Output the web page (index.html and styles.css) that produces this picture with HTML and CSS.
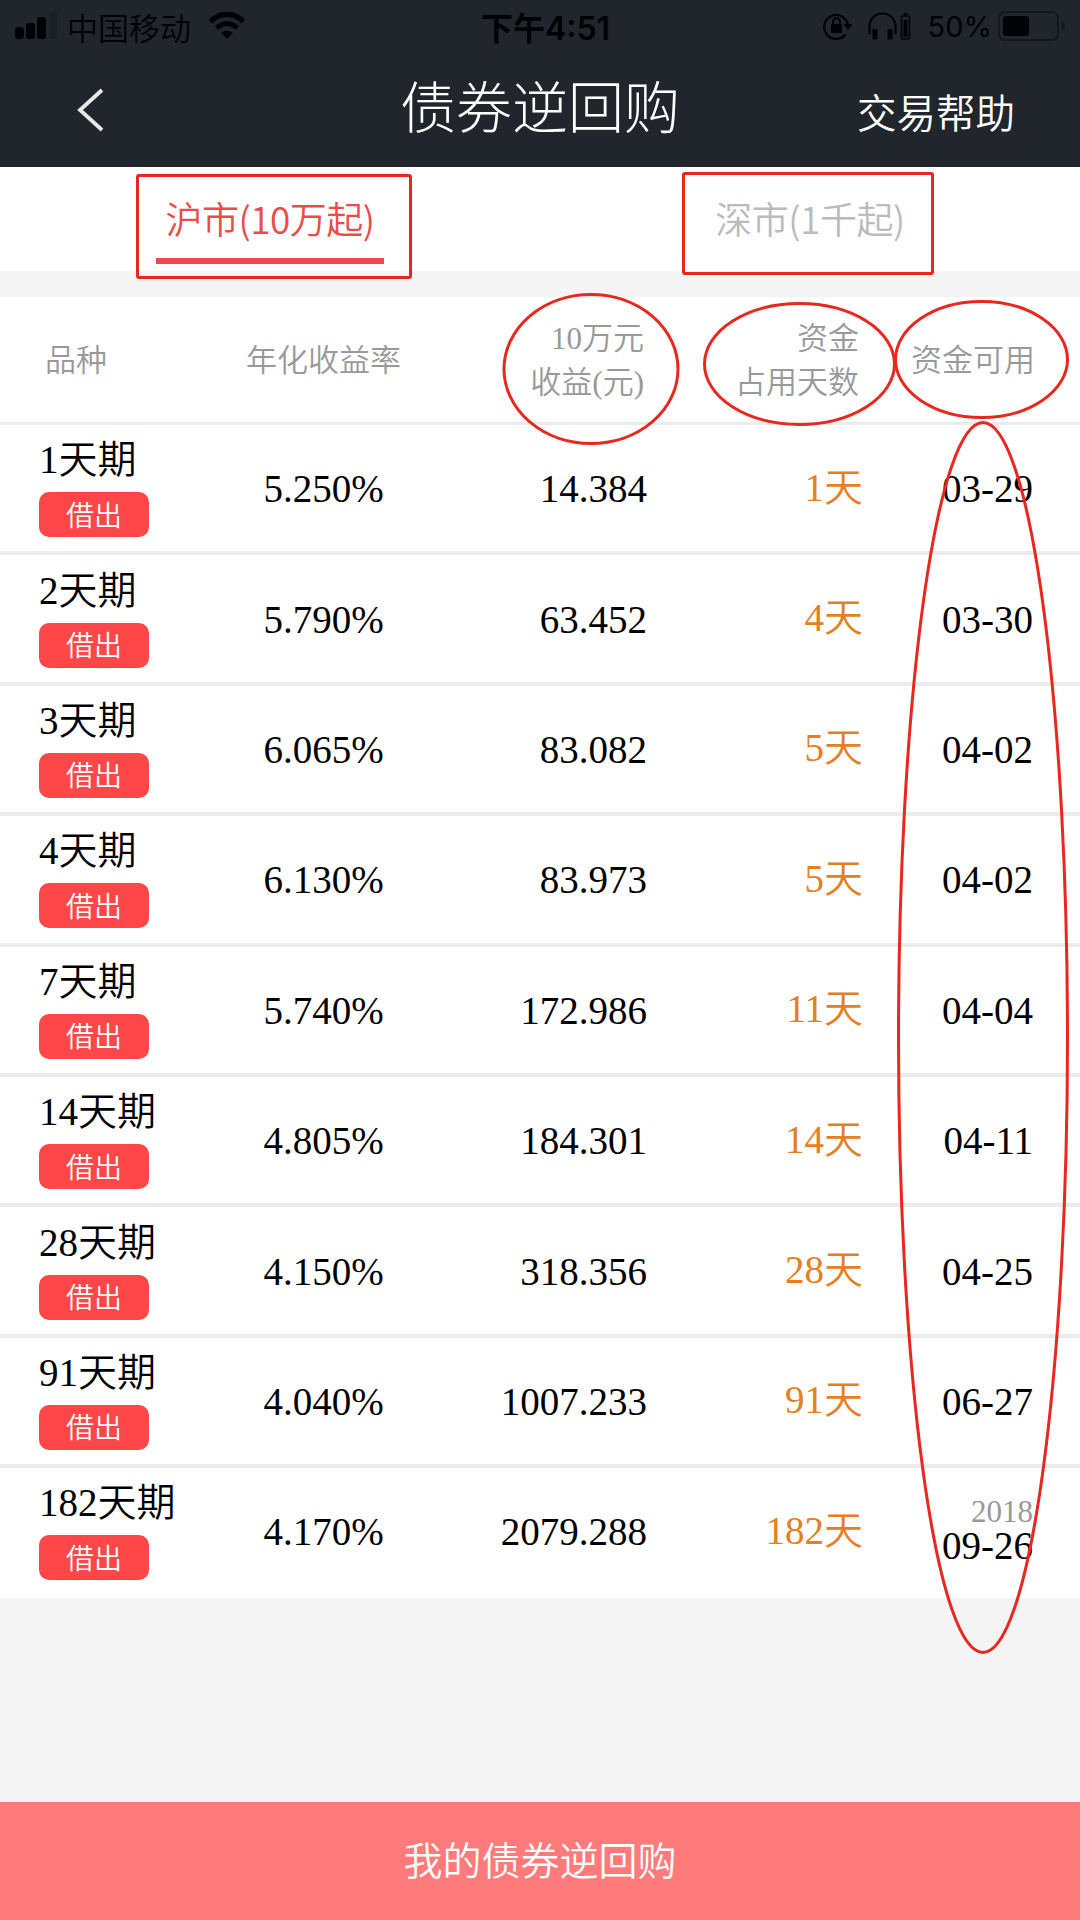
FILE: index.html
```html
<!DOCTYPE html>
<html lang="zh-CN">
<head>
<meta charset="UTF-8">
<meta name="viewport" content="width=device-width, initial-scale=1.0">
<title>债券逆回购</title>
<link rel="stylesheet" href="styles.css">
</head>
<body>
<div class="page">
    <header class="header">
        <div class="status-bar">
            <div class="status-left">
                <svg class="signal" width="44" height="28" viewBox="0 0 44 28">
                    <rect x="0" y="15" width="9" height="12" rx="3"/>
                    <rect x="11" y="11" width="9" height="16" rx="2.5"/>
                    <rect x="22" y="5" width="9" height="22" rx="2.5"/>
                    <rect x="34" y="0" width="8" height="27" rx="2.5" fill="#1b1f2a"/>
                </svg>
                <span class="carrier">中国移动</span>
                <svg class="wifi" width="38" height="28" viewBox="0 0 38 28">
                    <path d="M2.5 9.5Q19 -5 35.500 9.500" fill="none" stroke="#000306" stroke-width="5.500"/>
                    <path d="M8.500 16Q19 7 29.500 16" fill="none" stroke="#000306" stroke-width="5"/>
                    <path d="M13 21Q19 16.500 25 21L19 27Z"/>
                </svg>
            </div>
            <div class="clock">下午4:51</div>
            <div class="status-right">
                <svg class="lock" width="30" height="28" viewBox="0 0 30 28">
                    <path d="M22.500 22.500A12 12 0 1 1 25 13" fill="none" stroke="#000306" stroke-width="2.200"/>
                    <path d="M20.500 12H29.500L25 18Z"/>
                    <rect x="8" y="12" width="11" height="9" rx="1"/>
                    <path d="M10 13V9.500a3.500 3.500 0 0 1 7 0V13" fill="none" stroke="#000306" stroke-width="1.800"/>
                </svg>
                <svg class="headphones" width="43" height="28" viewBox="0 0 43 28">
                    <path d="M1.500 22V14.500a13 13 0 0 1 26 0V22" fill="none" stroke="#000306" stroke-width="2.200"/>
                    <rect x="4.500" y="17" width="5" height="10.500" rx="1"/>
                    <rect x="19.500" y="17" width="5" height="10.500" rx="1"/>
                    <rect x="33.500" y="4" width="8" height="23" rx="1.500" fill="none" stroke="#000306" stroke-width="1.600"/>
                    <rect x="35.500" y="0.800" width="4" height="2"/>
                    <rect x="35.500" y="8" width="4" height="17"/>
                </svg>
                <span class="percent">50%</span>
                <svg class="battery" width="68" height="30" viewBox="0 0 68 30">
                    <rect x="1" y="1" width="59" height="28" rx="6" fill="none" stroke="#14171f" stroke-width="2"/>
                    <rect x="5" y="5" width="26" height="20" rx="3"/>
                    <path d="M64 10Q70 15 64 20Z" fill="#14171f"/>
                </svg>
            </div>
        </div>
        <div class="nav">
            <svg class="back" width="28" height="44" viewBox="0 0 28 44">
                <path d="M25 2L3 22L25 42" fill="none" stroke="#e8e8e8" stroke-width="3.800"/>
            </svg>
            <h1 class="title">债券逆回购</h1>
            <a class="help">交易帮助</a>
        </div>
    </header>

    <nav class="tabs">
        <div class="tab"><span class="tab-label active">沪市(10万起)</span></div>
        <div class="tab"><span class="tab-label">深市(1千起)</span></div>
    </nav>

    <main class="table">
        <div class="row head">
            <div class="name">品种</div>
            <div class="rate">年化收益率</div>
            <div class="income">10万元<br>收益(元)</div>
            <div class="days">资金<br>占用天数</div>
            <div class="date">资金可用</div>
        </div>
        <div class="row">
            <div class="name">1天期<button class="lend">借出</button></div>
            <div class="rate">5.250%</div>
            <div class="income">14.384</div>
            <div class="days">1天</div>
            <div class="date">03-29</div>
        </div>
        <div class="row">
            <div class="name">2天期<button class="lend">借出</button></div>
            <div class="rate">5.790%</div>
            <div class="income">63.452</div>
            <div class="days">4天</div>
            <div class="date">03-30</div>
        </div>
        <div class="row">
            <div class="name">3天期<button class="lend">借出</button></div>
            <div class="rate">6.065%</div>
            <div class="income">83.082</div>
            <div class="days">5天</div>
            <div class="date">04-02</div>
        </div>
        <div class="row">
            <div class="name">4天期<button class="lend">借出</button></div>
            <div class="rate">6.130%</div>
            <div class="income">83.973</div>
            <div class="days">5天</div>
            <div class="date">04-02</div>
        </div>
        <div class="row">
            <div class="name">7天期<button class="lend">借出</button></div>
            <div class="rate">5.740%</div>
            <div class="income">172.986</div>
            <div class="days">11天</div>
            <div class="date">04-04</div>
        </div>
        <div class="row">
            <div class="name">14天期<button class="lend">借出</button></div>
            <div class="rate">4.805%</div>
            <div class="income">184.301</div>
            <div class="days">14天</div>
            <div class="date">04-11</div>
        </div>
        <div class="row">
            <div class="name">28天期<button class="lend">借出</button></div>
            <div class="rate">4.150%</div>
            <div class="income">318.356</div>
            <div class="days">28天</div>
            <div class="date">04-25</div>
        </div>
        <div class="row">
            <div class="name">91天期<button class="lend">借出</button></div>
            <div class="rate">4.040%</div>
            <div class="income">1007.233</div>
            <div class="days">91天</div>
            <div class="date">06-27</div>
        </div>
        <div class="row">
            <div class="name">182天期<button class="lend">借出</button></div>
            <div class="rate">4.170%</div>
            <div class="income">2079.288</div>
            <div class="days">182天</div>
            <div class="date"><span class="year">2018</span>09-26</div>
        </div>
    </main>

    <button class="mine">我的债券逆回购</button>

    <!-- red marks drawn over the page -->
    <svg class="marks" width="1080" height="1920" viewBox="0 0 1080 1920">
        <rect x="137.500" y="175.500" width="273" height="102" rx="1.500"/>
        <rect x="683.500" y="173.500" width="249" height="100" rx="1.500"/>
        <ellipse cx="591" cy="369" rx="87" ry="74.500"/>
        <ellipse cx="799.500" cy="364" rx="95" ry="60.500"/>
        <ellipse cx="981.500" cy="359.500" rx="86" ry="58"/>
        <ellipse cx="983" cy="1037.500" rx="84.500" ry="615"/>
    </svg>
</div>
</body>
</html>
```
FILE: styles.css
```css
* {
    box-sizing: border-box;
}
body {
    margin: 0;
    background-color: #f4f4f4;
    font-family: "Noto Sans CJK SC", sans-serif;
    font-weight: 350;
}
button {
    border: none;
    padding: 0;
    font-family: inherit;
    font-weight: inherit;
    color: #fff;
}
.page {
    position: relative;
    display: flex;
    flex-direction: column;
    height: 1920px;
    overflow: hidden;
}

/* header */
.header {
    height: 167px;
    background-color: #21262d;
}
.status-bar {
    display: grid;
    grid-template-columns: 1fr auto 1fr;
    align-items: center;
    height: 52px;
    padding: 0 14px 0 15px;
    color: #000306;
    fill: #000306;
    font-size: 31px;
}
.status-left,
.status-right {
    display: flex;
    align-items: center;
}
.status-right {
    justify-content: flex-end;
}
.carrier {
    margin: 0 17px 0 8px;
}
.clock {
    padding-left: 10px;
    font-family: Inter, "Noto Sans CJK SC", sans-serif;
    font-weight: 600;
    font-size: 32px;
}
.headphones {
    margin-left: 15px;
}
.percent {
    margin: 0 6px 0 17px;
    font-family: Inter, sans-serif;
    font-weight: 400;
    font-size: 29px;
}
.nav {
    display: grid;
    grid-template-columns: 300px 1fr 300px;
    align-items: center;
    height: 115px;
    color: #fff;
}
.back {
    margin-left: 77px;
}
.title {
    margin: 0;
    padding-bottom: 12px;
    font-size: 56px;
    font-weight: 300;
    line-height: 60px;
    text-align: center;
}
.help {
    padding: 2px 65px 0 0;
    font-size: 39.5px;
    text-align: right;
}

/* tabs */
.tabs {
    display: grid;
    grid-template-columns: 1fr 1fr;
    height: 104px;
    background-color: #fff;
    margin-bottom: 26px;
}
.tab {
    display: flex;
    justify-content: center;
}
.tab-label {
    height: 97px;
    padding: 0 9px;
    font-size: 37px;
    line-height: 102px;
    letter-spacing: -0.5px;
    color: #bbb;
}
.tab-label.active {
    color: #ec4b4b;
    border-bottom: 6px solid #ec4b4b;
}

/* table */
.table {
    background-color: #fff;
}
.row {
    display: grid;
    grid-template-columns: 223px 201px 223px 216px 170px;
    align-items: center;
    height: 130.4px;
    padding-top: 2px;
    border-bottom: 4px solid #ebebeb;
    font-family: "Liberation Serif", "Noto Sans CJK SC", serif;
    font-size: 39px;
    line-height: 44px;
    color: #000;
}
.row:last-child {
    height: 129.4px;
    padding-bottom: 3px;
    border-bottom: none;
}
.row.head {
    height: 128px;
    border-bottom-width: 3px;
    font-size: 31px;
    color: #999;
}
.name {
    padding: 0 0 3px 39px;
}
.head .name {
    padding: 0 0 0 45px;
}
.rate {
    text-align: center;
}
.income,
.days,
.date {
    text-align: right;
}
.days {
    padding-bottom: 3px;
    color: #e67e22;
}
.head .income {
    padding-right: 3px;
}
.head .days {
    padding: 0 4px 0 0;
    color: #999;
}
.head .date {
    margin-right: -2px;
}
.lend {
    display: block;
    width: 110px;
    height: 45px;
    margin-top: 10px;
    padding-bottom: 2px;
    border-radius: 10px;
    background-color: #ff4649;
    font-family: "Noto Sans CJK SC", sans-serif;
    font-size: 28px;
    line-height: 42px;
}
.year {
    display: block;
    padding-top: 4px;
    font-size: 31px;
    line-height: 24px;
    color: #999;
}

.mine {
    height: 118px;
    margin-top: auto;
    padding-bottom: 7px;
    background-color: #ff7a7a;
    font-size: 39px;
}
.marks {
    position: absolute;
    top: 0;
    left: 0;
    fill: none;
    stroke: #e8281e;
    stroke-width: 3;
    pointer-events: none;
}
```
